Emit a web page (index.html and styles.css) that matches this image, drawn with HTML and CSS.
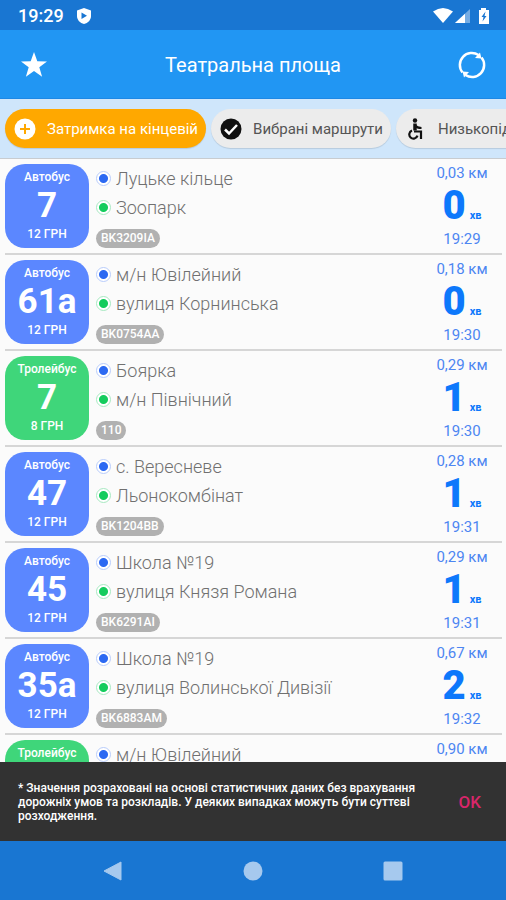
FILE: index.html
```html
<!DOCTYPE html>
<html lang="uk">
<head>
<meta charset="utf-8">
<meta name="viewport" content="width=device-width, initial-scale=1">
<title>Театральна площа</title>
<link rel="stylesheet" href="styles.css">
</head>
<body>
<div class="status">
  <span class="status-time">19:29</span>
  <svg class="shield" width="16" height="18" viewBox="0 0 16 18"><path fill="#fff" d="M8 1l7 2.500v5.500c0 4-3 7-7 8-4-1-7-4-7-8V3.500z"/><path fill="#1976d2" d="M5.500 5.500l5.500 3.200-5.500 3.300z"/></svg>
  <svg class="signals" width="57" height="18" viewBox="0 0 57 18">
    <path fill="#fff" d="M0 4.500Q10 -2.500 20 4.500L10 16z"/>
    <path fill="#fff" opacity=".4" d="M37 2v14H22z"/><path fill="#fff" d="M32 6.700V16H22z"/>
    <path fill="#fff" d="M48 1h5v2h3v14H46V3h2z"/><path fill="#1976d2" d="M52.500 4.500l-4 5.500h2l-1 4.500 4-5.500h-2z"/>
  </svg>
</div>
<header class="bar">
  <button class="icon-button" type="button" aria-label="Вибране"><svg width="26" height="26" viewBox="0 0 26 26"><path fill="#fff" d="M13 0l3.300 9.200 9.700.2-7.700 5.900 2.800 9.400-8.100-5.600-8.100 5.600 2.800-9.400L0 9.400l9.700-.2z"/></svg></button>
  <h1>Театральна площа</h1>
  <button class="icon-button" type="button" aria-label="Оновити"><svg width="28" height="28" viewBox="0 0 28 28"><g fill="none" stroke="#fff" stroke-width="2.500"><path d="M4.500 21.500A12 12 0 0 1 20.500 4"/><path d="M23.500 6.500A12 12 0 0 1 7.500 24"/></g><path fill="#fff" d="M17 7l6.500.500-1.500-6zM11 21l-6.500-.5 1.500 6z"/></svg></button>
</header>
<nav class="chips">
  <button class="chip chip-active" type="button"><svg width="22" height="22" viewBox="0 0 22 22"><circle cx="11" cy="11" r="10.500" fill="#fff"/><path stroke="#ffa800" stroke-width="2" d="M11 6v10M6 11h10"/></svg>Затримка на кінцевій</button>
  <button class="chip" type="button"><svg width="22" height="22" viewBox="0 0 22 22"><circle cx="11" cy="11" r="10.500" fill="#111"/><path fill="none" stroke="#fff" stroke-width="2.500" d="M5 11.500l4 4 8-8.500"/></svg>Вибрані маршрути</button>
  <button class="chip" type="button"><svg width="22" height="22" viewBox="0 0 22 22"><circle cx="10" cy="2.500" r="2.200" fill="#111"/><g fill="none" stroke="#111" stroke-width="2.200"><path stroke-width="3.500" d="M10 5.500v7"/><path d="M9 13.500h7V21"/><path d="M10 7.500q2 2.500 6.500 2.500M7 12.500a4.200 4.200 0 1 0 5.500 5.200"/></g></svg>Низькопідлогові</button>
</nav>
<main class="list" id="list"></main>
<div class="snack" role="status">
  <p>* Значення розраховані на основі статистичних даних без врахування дорожніх умов та розкладів. У деяких випадках можуть бути суттєві розходження.</p>
  <button type="button">OK</button>
</div>
<nav class="system">
  <button type="button" aria-label="Назад"><svg width="20" height="20" viewBox="0 0 20 20"><path d="M1 10L18 1v18z" stroke-width="1" stroke-linejoin="round"/></svg></button>
  <button type="button" aria-label="Додому"><svg width="20" height="20" viewBox="0 0 20 20"><circle cx="10" cy="10" r="9.500"/></svg></button>
  <button type="button" aria-label="Огляд"><svg width="20" height="20" viewBox="0 0 20 20"><rect x=".5" y=".5" width="19" height="19" rx="1.500"/></svg></button>
</nav>
<script src="app.js"></script>
</body>
</html>
```
FILE: styles.css
```css
* { box-sizing: border-box; }
body {
  margin: 0;
  height: 100vh;
  display: flex;
  flex-direction: column;
  background: #fbfbfb;
  font-family: Roboto, "Noto Sans", sans-serif;
  overflow: hidden;
}
button {
  border: 0;
  padding: 0;
  background: none;
  font: inherit;
  color: inherit;
}
svg { display: block; flex: none; }
.status, .bar, .chips, .snack, .system { flex: none; }

.status {
  display: flex;
  align-items: center;
  padding: 2px 16px 0 18px;
  height: 30px;
  background: #1976d2;
  color: #fff;
}
.status-time { font-size: 18px; line-height: 20px; font-weight: 500; }
.shield { margin-left: 12px; }
.signals { margin-left: auto; }

.bar {
  display: flex;
  align-items: center;
  justify-content: space-between;
  padding: 21px 20px 19px;
  background: #2196f3;
  color: #fff;
  border-bottom: 1px solid #1e88e5;
}
.bar h1 {
  margin: 0;
  font-size: 20px;
  line-height: 28px;
  font-weight: 400;
}
.icon-button {
  width: 28px;
  display: flex;
  justify-content: center;
}

.chips {
  display: flex;
  gap: 5px;
  padding: 10px 5px;
  background: #cfe6fb;
  border-bottom: 1px solid #c8ccd0;
  overflow: hidden;
}
.chip {
  flex: none;
  display: flex;
  align-items: center;
  gap: 11px;
  height: 39px;
  padding: 0 8px 0 9px;
  border-radius: 20px;
  background: #ececec;
  color: #555;
  font-size: 15px;
  box-shadow: 0 1px 1px rgba(0, 0, 0, .12);
}
.chip-active { background: #ffa800; color: #fff; }

.list {
  flex: 1;
  min-height: 0;
  padding: 0 4px 0 5px;
  overflow: hidden;
}
.row {
  display: flex;
  min-height: 96px;
  padding: 5px 0;
  border-bottom: 2px solid #d6d6d6;
}
.tile {
  width: 84px;
  padding: 4px 0;
  border-radius: 20px;
  background: #5b87ff;
  color: #fff;
  text-align: center;
  font-size: 12px;
  line-height: 19px;
  font-weight: 500;
}
.tile-green { background: #3fd67a; }
.tile strong {
  display: block;
  font-size: 35px;
  line-height: 38px;
  font-weight: 700;
}
.tile span { display: block; }
.stops {
  flex: 1;
  min-width: 0;
  padding-left: 7px;
  color: #707070;
}
.stop {
  display: flex;
  align-items: center;
  gap: 5px;
  font-size: 18px;
  line-height: 29px;
  font-weight: 300;
  white-space: nowrap;
}
.dot {
  width: 15px;
  height: 15px;
  border-radius: 50%;
  border: 1px solid #b9cdfb;
  background: radial-gradient(circle, #2c69f2 4px, #fff 5px);
}
.dot-to {
  border-color: #a8e9c2;
  background: radial-gradient(circle, #14cc5d 4px, #fff 5px);
}
.plate {
  display: table;
  margin-top: 7px;
  padding: 0 5px;
  border-radius: 10px;
  background: #b1b1b1;
  color: #fff;
  font-size: 12px;
  line-height: 19px;
  font-weight: 500;
}
.eta {
  width: 80px;
  display: flex;
  flex-direction: column;
  align-items: center;
  color: #4d86f2;
  font-size: 15px;
  line-height: 18px;
}
.eta-time {
  display: flex;
  align-items: baseline;
  gap: 4px;
  color: #0d78fb;
  font-size: 11px;
  line-height: 12px;
  font-weight: 700;
}
.eta-time b { font-size: 40px; line-height: 48px; }

.snack {
  display: flex;
  align-items: center;
  justify-content: space-between;
  padding: 19px 25px 18px 18px;
  background: #323232;
  color: #fff;
}
.snack p {
  margin: 0;
  max-width: 410px;
  font-size: 12px;
  line-height: 14px;
  font-weight: 500;
}
.snack button {
  color: #d8266a;
  font-size: 17px;
  font-weight: 500;
}
.system {
  display: flex;
  justify-content: space-between;
  padding: 20px 103px 19px;
  background: #1976d2;
}
.system svg { fill: #a6c9ee; stroke: #a6c9ee; stroke-width: 0; }
```
FILE: app.js
```js
const rows = [
  ['Автобус', '7', '12 ГРН', 'Луцьке кільце', 'Зоопарк', 'BK3209IA', '0,03 км', '0', '19:29'],
  ['Автобус', '61а', '12 ГРН', 'м/н Ювілейний', 'вулиця Корнинська', 'BK0754AA', '0,18 км', '0', '19:30'],
  ['Тролейбус', '7', '8 ГРН', 'Боярка', 'м/н Північний', '110', '0,29 км', '1', '19:30'],
  ['Автобус', '47', '12 ГРН', 'с. Вересневе', 'Льонокомбінат', 'BK1204BB', '0,28 км', '1', '19:31'],
  ['Автобус', '45', '12 ГРН', 'Школа №19', 'вулиця Князя Романа', 'BK6291AI', '0,29 км', '1', '19:31'],
  ['Автобус', '35а', '12 ГРН', 'Школа №19', 'вулиця Волинської Дивізії', 'BK6883AM', '0,67 км', '2', '19:32'],
  ['Тролейбус', '', '', 'м/н Ювілейний', '', '', '0,90 км', '', '']
];
document.getElementById('list').innerHTML = rows.map(([kind, num, price, from, to, plate, dist, min, time]) => `
  <article class="row">
    <div class="tile${kind === 'Тролейбус' ? ' tile-green' : ''}"><span>${kind}</span><strong>${num}</strong><span>${price}</span></div>
    <div class="stops">
      <div class="stop"><i class="dot"></i>${from}</div>
      ${to && `<div class="stop"><i class="dot dot-to"></i>${to}</div>`}
      ${plate && `<span class="plate">${plate}</span>`}
    </div>
    <div class="eta"><span>${dist}</span>${min && `<span class="eta-time"><b>${min}</b>хв</span>`}<span>${time}</span></div>
  </article>`).join('');
```
